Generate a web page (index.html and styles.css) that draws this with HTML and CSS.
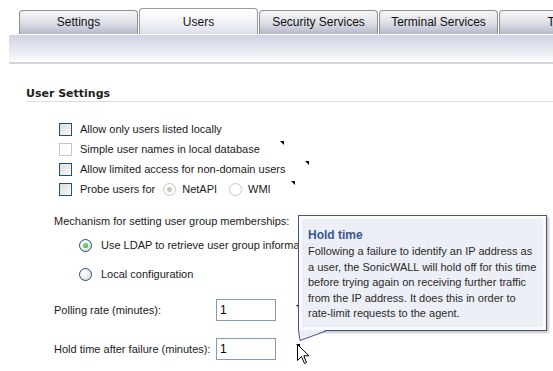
FILE: index.html
```html
<!DOCTYPE html>
<html>
<head>
<meta charset="utf-8">
<link rel="stylesheet" href="styles.css">
</head>
<body>
<div class="tabs">
  <div class="tab">Settings</div>
  <div class="tab active">Users</div>
  <div class="tab">Security Services</div>
  <div class="tab">Terminal Services</div>
  <div class="tab">Test</div>
</div>
<div class="band"></div>

<div class="content">
  <div class="heading">User Settings</div>

  <div class="checks">
    <div class="row"><span class="check"></span><span>Allow only users listed locally</span></div>
    <div class="row"><span class="check disabled"></span><span>Simple user names in local database</span><span class="help"></span></div>
    <div class="row"><span class="check"></span><span>Allow limited access for non-domain users</span><span class="help"></span></div>
    <div class="row"><span class="check"></span><span>Probe users for</span><span class="radio disabled checked inl"></span><span>NetAPI</span><span class="radio disabled inl wmi"></span><span>WMI</span><span class="help"></span></div>
  </div>

  <div class="mech">Mechanism for setting user group memberships:</div>
  <div class="radios">
    <div class="row"><span class="radio checked"></span><span>Use LDAP to retrieve user group information</span><span class="btn">Configure</span></div>
    <div class="row"><span class="radio"></span><span>Local configuration</span></div>
  </div>

  <div class="field first"><span class="flabel">Polling rate (minutes):</span><span class="input">1</span><span class="help up"></span></div>
  <div class="field second"><span class="flabel">Hold time after failure (minutes):</span><span class="input">1</span><span class="help up"></span></div>
</div>

<div class="tooltip">
  <div class="tt-title">Hold time</div>
  <div class="tt-body">Following a failure to identify an IP address as a user, the SonicWALL will hold off for this time before trying again on receiving further traffic from the IP address. It does this in order to rate-limit requests to the agent.</div>
</div>
<svg class="tail" width="30" height="14" viewBox="0 0 30 14">
  <polygon points="0.5,0 2,10.5 28,0" fill="#eceef6"/>
  <polyline points="0.5,0.5 2,10.5 28,1" fill="none" stroke="#45557a" stroke-width="1"/>
</svg>
<svg class="cursor" width="13" height="22" viewBox="0 0 13 22">
  <path d="M0.5,0.5 L0.5,16.5 L4.5,12.5 L7.5,19.5 L9.5,18.5 L6.8,11.8 L12,11.8 Z" fill="#fff" stroke="#000" stroke-width="1" stroke-linejoin="miter"/>
</svg>
</body>
</html>
```

FILE: styles.css
```css
html, body {
  margin: 0;
  padding: 0;
  background: #fff;
  overflow: hidden;
}
body {
  font-family: "Liberation Sans", Arial, sans-serif;
  font-size: 11px;
  color: #1a1a1a;
  width: 553px;
  height: 371px;
  position: relative;
}
.tabs {
  display: flex;
  align-items: flex-end;
  height: 34px;
  padding-left: 19px;
  overflow: hidden;
}
.tab {
  flex: 0 0 auto;
  width: 119px;
  height: 24px;
  margin-right: 1px;
  box-sizing: border-box;
  border: 1px solid #8e8e96;
  border-bottom: none;
  border-radius: 4px 4px 0 0;
  background: linear-gradient(#f6f6f8, #e2e3ea 45%, #b6b9cb);
  font-size: 12px;
  line-height: 22px;
  text-align: center;
  color: #111;
}
.tab.active {
  height: 26px;
  line-height: 26px;
  background: linear-gradient(#ffffff, #f2f3f7 50%, #dcdfea);
  border-color: #9a9aa2;
}
.band {
  margin: 1px 0 0 9px;
  height: 27px;
  background: linear-gradient(#cfd3e3, #e4e7ef 50%, #fdfdfe);
  border-bottom: 2px solid #d3d5dd;
}
.content {
  padding: 23px 0 0 26px;
}
.heading {
  font: bold 11px/14px "DejaVu Sans", Verdana, sans-serif;
  color: #1e1e1e;
  border-bottom: 1px solid #dddddd;
}
.checks {
  margin: 17px 0 0 33px;
}
.row {
  display: flex;
  align-items: center;
  height: 20px;
}
.check {
  flex: 0 0 auto;
  width: 13px;
  height: 13px;
  box-sizing: border-box;
  border: 1px solid #1c5180;
  background: linear-gradient(135deg, #dcdcd7, #f4f4f2 80%, #fff);
  margin-right: 8px;
}
.check.disabled {
  border-color: #cac8bb;
  background: #fff;
}
.help {
  flex: 0 0 auto;
  width: 0;
  height: 0;
  border-top: 4px solid #000;
  border-left: 4px solid transparent;
  align-self: flex-start;
  margin: 2px 0 0 20px;
}
.help.up {
  margin-top: 6px;
}
.radio {
  flex: 0 0 auto;
  width: 13px;
  height: 13px;
  box-sizing: border-box;
  border-radius: 50%;
  border: 1px solid #1c5180;
  background: radial-gradient(circle at 35% 35%, #ffffff, #e8e8e4 60%, #d6d6cf);
  margin-right: 9px;
  position: relative;
}
.radio.checked::after {
  content: "";
  position: absolute;
  left: 3px;
  top: 3px;
  width: 5px;
  height: 5px;
  border-radius: 50%;
  background: radial-gradient(circle at 40% 40%, #8ee08a, #21a121);
}
.radio.disabled {
  border-color: #cac8bb;
  background: #fff;
}
.radio.disabled.checked::after {
  background: #cac8bb;
}
.radio.inl {
  margin-left: 8px;
  margin-right: 6px;
}
.radio.wmi {
  margin-left: 12px;
}
.mech {
  margin: 15px 0 0 28px;
  line-height: 14px;
}
.radios {
  margin: 7px 0 0 53px;
  display: flex;
  flex-direction: column;
  gap: 9px;
}
.btn {
  margin-left: 33px;
  width: 79px;
  height: 18px;
  box-sizing: border-box;
  border: 1px solid #a0a0a8;
  border-radius: 2px;
  line-height: 16px;
  text-align: center;
  color: #999;
  background: #f4f4f4;
}
.field {
  display: flex;
  align-items: center;
  height: 22px;
  margin-left: 28px;
}
.field.first { margin-top: 15px; }
.field.second { margin-top: 17px; }
.flabel {
  width: 162px;
  flex: 0 0 auto;
}
.input {
  width: 60px;
  height: 22px;
  box-sizing: border-box;
  border: 1px solid #7f9db9;
  font-size: 12px;
  line-height: 20px;
  padding-left: 3px;
  color: #000;
  background: #fff;
}
.tooltip {
  position: absolute;
  left: 298px;
  top: 215px;
  width: 249px;
  height: 116px;
  box-sizing: border-box;
  border: 1px solid #45557a;
  background: rgba(236, 238, 246, 0.95);
  box-shadow: inset 0 0 0 3px rgba(250, 251, 253, 0.9), 2px 2px 2px rgba(0, 0, 0, 0.22);
  padding: 12px 8px 0 9px;
}
.tt-title {
  font-weight: bold;
  font-size: 12px;
  line-height: 15px;
  color: #3a5790;
}
.tt-body {
  line-height: 15.5px;
  color: #2a2a2a;
  margin-top: 1px;
}
.tail {
  position: absolute;
  left: 298px;
  top: 330px;
}
.cursor {
  position: absolute;
  left: 297px;
  top: 344px;
}
```
